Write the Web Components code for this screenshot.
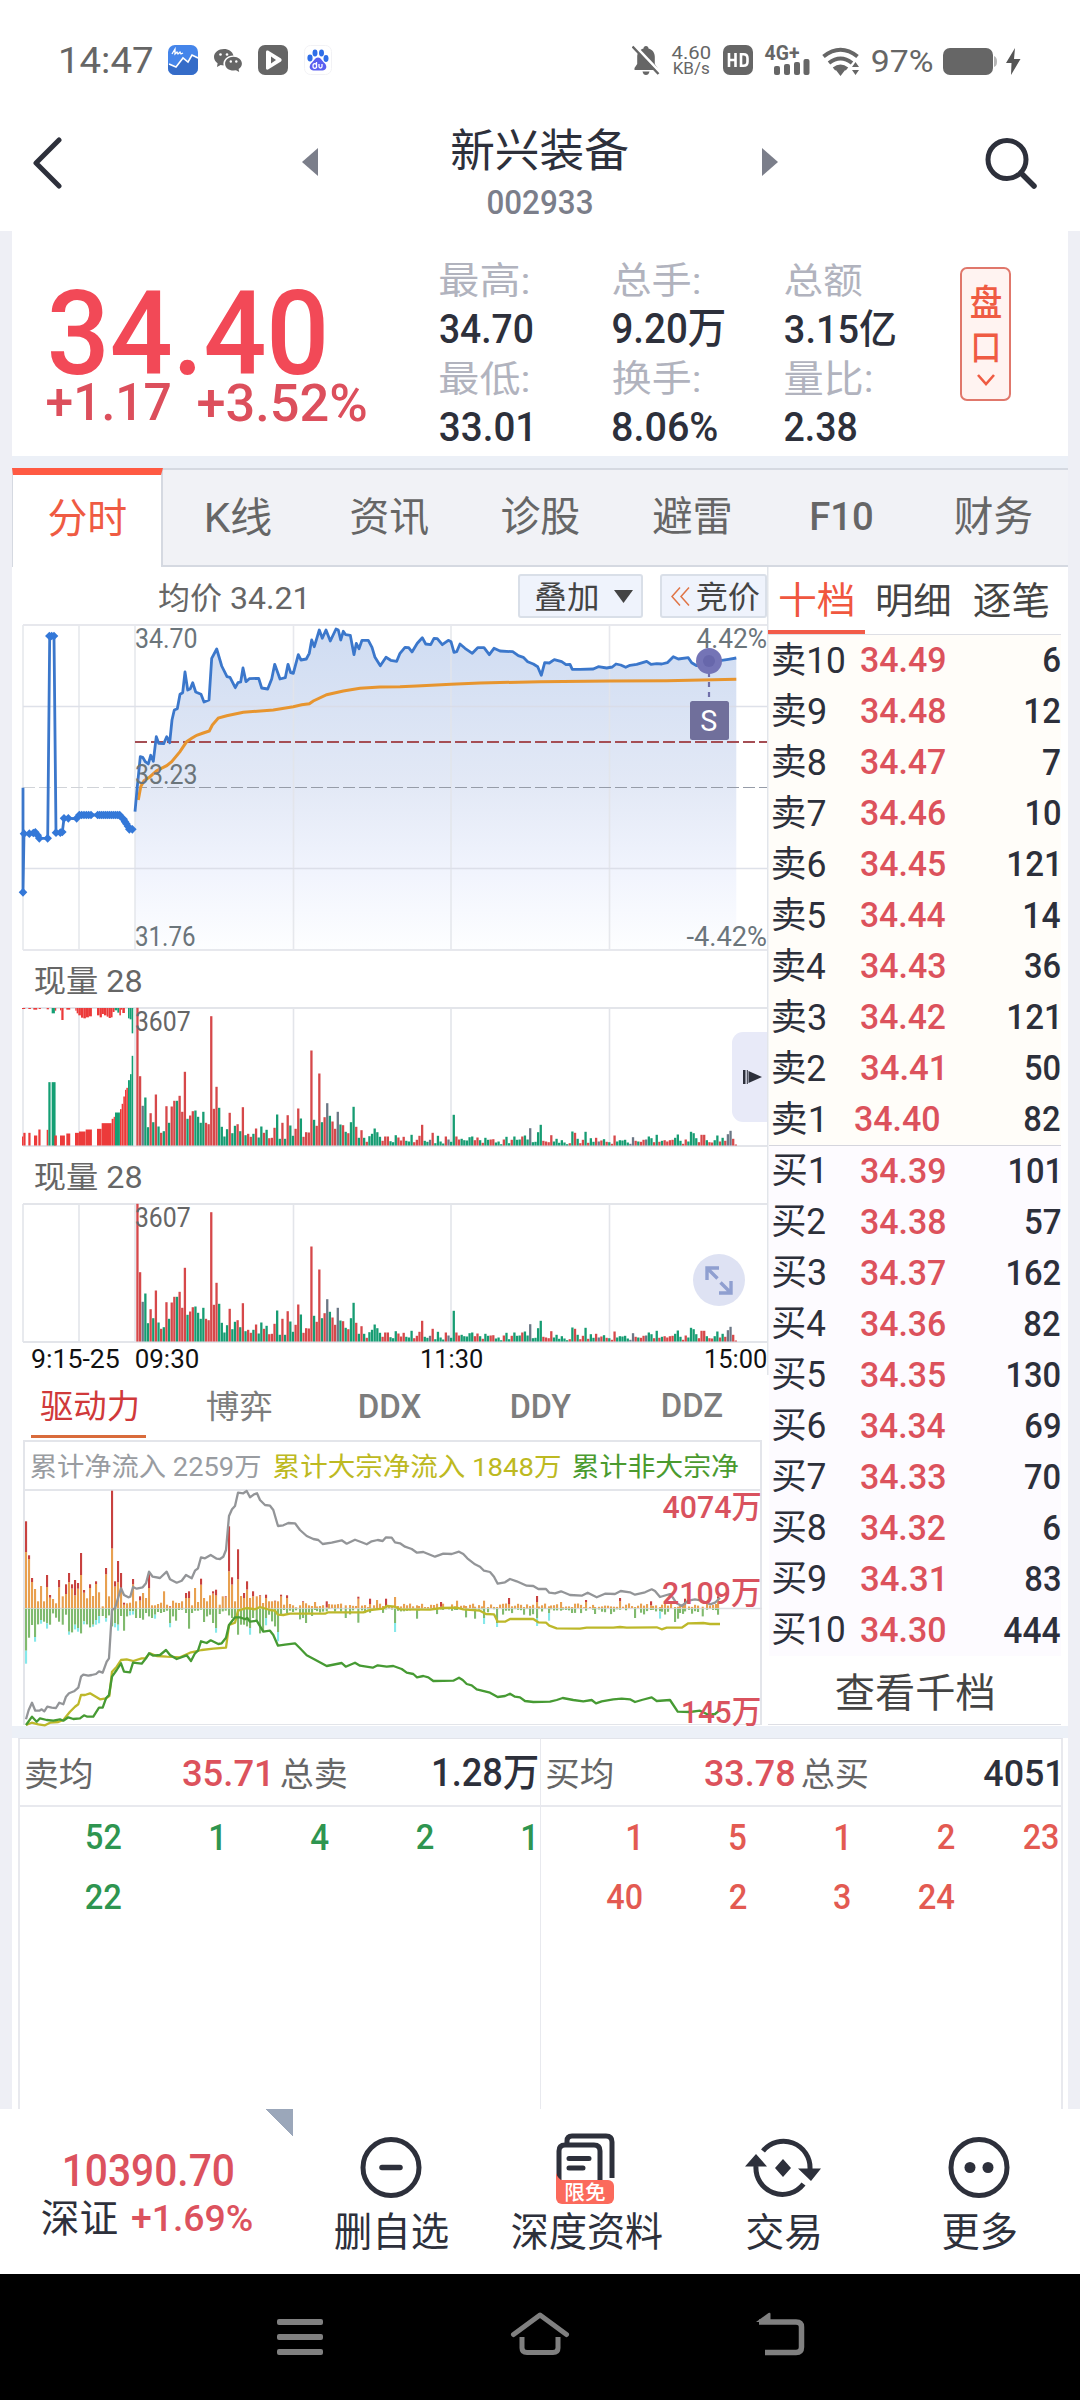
<!DOCTYPE html>
<html lang="zh-CN">
<head>
<meta charset="utf-8">
<title>新兴装备 002933</title>
<style>
html,body{margin:0;padding:0;background:#fff}
body{width:1080px;font-family:Roboto,"Noto Sans CJK SC",sans-serif;color:#2d303b}
.body{display:flex;flex-direction:column;width:1080px;height:1878px;box-sizing:border-box;padding:0 12px;background:#eeeff5}
.split{display:flex;height:1159px;background:#fff}
</style>
</head>
<body>
<status-bar></status-bar>
<title-bar name="新兴装备" code="002933"></title-bar>
<div class="body">
  <quote-head></quote-head>
  <main-tabs></main-tabs>
  <div class="split"><time-charts></time-charts><order-book></order-book></div>
  <queue-panel></queue-panel>
</div>
<bottom-bar></bottom-bar>
<system-nav></system-nav>
<script>
const FAMILY='Roboto,"Noto Sans CJK SC",sans-serif';
const ctx=document.createElement('canvas').getContext('2d');

/* A line of text whose box is its ink: w and h are the ink's size in pixels, k a width factor when w is not given. */
class InkText extends HTMLElement{
  connectedCallback(){
    if(this.shadowRoot)return;
    const root=this.attachShadow({mode:'open'});
    const text=this.textContent,weight=getComputedStyle(this).fontWeight;
    ctx.font=`${weight} 100px ${FAMILY}`;
    let m=ctx.measureText(text);
    const h=+this.getAttribute('h');
    const size=h*100/(m.actualBoundingBoxAscent+m.actualBoundingBoxDescent);
    const q=size/100,left=-m.actualBoundingBoxLeft*q,ink=(m.actualBoundingBoxRight+m.actualBoundingBoxLeft)*q;
    const w=+this.getAttribute('w')||ink*(+this.getAttribute('k')||1);
    const line=size*1.2,base=(line-(m.fontBoundingBoxAscent+m.fontBoundingBoxDescent)*q)/2+m.fontBoundingBoxAscent*q;
    const sx=w/ink;
    root.innerHTML=`<style>:host{display:block;flex:none;width:${w}px;height:${h}px}
      span{display:block;width:max-content;white-space:pre;font-family:${FAMILY};font-size:${size}px;line-height:${line}px;transform-origin:0 0;
      transform:translate(${-left*sx}px,${m.actualBoundingBoxAscent*q-base}px) scaleX(${sx})}</style><span><slot></slot></span>`;
  }
}
customElements.define('ink-text',InkText);

const t=(s,w,h,style='')=>`<ink-text ${w?`w="${w}"`:''} h="${h}" style="${style}">${s}</ink-text>`;
const part=(name,build)=>customElements.define(name,class extends HTMLElement{
  connectedCallback(){if(!this.shadowRoot)this.attachShadow({mode:'open'}).innerHTML=build(this)}
});
const ic=(w,h,vb,body,style='')=>`<svg width="${w}" height="${h}" viewBox="${vb}" style="flex:none;display:block;${style}">${body}</svg>`;

part('status-bar',()=>`<style>
:host{display:flex;height:75px;padding:45px 60px 0 61px;box-sizing:border-box;width:1080px;height:120px;align-items:flex-start;color:#666}
.net{margin-left:12px;display:flex;flex-direction:column;gap:3px;align-items:center;margin-top:1px}
</style>
${t('14:47',91,27,'margin-top:2px')}
${ic(30,30,'0 0 30 30','<rect width="30" height="30" rx="7" fill="#4585ea"/><path d="M0 19l8 2 6-8 5 3 5-6 6 4v9a7 7 0 0 1-7 7H7a7 7 0 0 1-7-7z" fill="#356cc8"/><path d="M1 19l7 3 7-9 5 4 4-7 6 3" fill="none" stroke="#fff" stroke-width="1.6"/><path d="M4 9l3-5 0 5 2-2 1 2 2-2 1 2 2-1" fill="none" stroke="#fff" stroke-width="1.3"/>','margin-left:16px')}
${ic(28,24,'0 0 28 24','<path d="M10 1C4.500 1 0 4.500 0 9c0 2.600 1.400 4.800 3.600 6.200L3 19l3.600-2 3 .5C8.500 12 13 7.500 19.500 7.600 18.500 3.500 14.500 1 10 1z" fill="#666"/><path d="M19.500 8.800c-4.700 0-8.400 3-8.400 6.900s3.700 6.900 8.400 6.900l2.500-.3 3.200 1.700-.6-2.900c1.900-1.300 3.300-3.200 3.300-5.400 0-3.900-3.700-6.900-8.400-6.900z" fill="#666"/><g fill="#fff"><circle cx="6.500" cy="6.500" r="1.300"/><circle cx="13" cy="6.500" r="1.300"/><circle cx="16.800" cy="13.500" r="1.200"/><circle cx="22.300" cy="13.500" r="1.200"/></g>','margin:3px 0 0 16px')}
${ic(30,30,'0 0 30 30','<rect width="30" height="30" rx="7" fill="#666"/><path d="M8 6.500q0-1.500 2-1l13 8q1.500 1.500 0 3l-13 8q-2 .5-2-1z" fill="#fff"/><path d="M13 11.500v7l5-3.500z" fill="#666"/>','margin-left:16px')}
${ic(28,30,'0 0 28 30','<rect x=".5" y=".5" width="27" height="29" rx="6" fill="#fff" stroke="#f2f2f5"/><g fill="#2e6ee8"><ellipse cx="6" cy="13" rx="2.600" ry="3.400"/><ellipse cx="11" cy="8" rx="2.500" ry="3.400"/><ellipse cx="17.500" cy="8" rx="2.500" ry="3.400"/><ellipse cx="22" cy="13.500" rx="2.500" ry="3.400"/></g><path d="M14 12.500c3 0 4 3.500 6.500 5.500 3.500 3.500 1.500 7.500-2 7.500h-9c-3.500 0-5.500-4-2-7.500C10 16 11 12.500 14 12.500z" fill="#5a5ff0"/><path d="M12.500 17v6M12.500 21a1.800 1.800 0 1 1-3.400 0 1.800 1.800 0 1 1 3.400 0M15 19v2.500q0 1.500 1.500 1.500T18 21.500V19" stroke="#fff" stroke-width="1.300" fill="none"/>','margin-left:16px')}
${ic(28,30,'0 0 28 30','<path d="M14 1c1.500 0 2.500 1 2.500 2.400 4 1 6.300 4.300 6.300 8.400V19l2.700 4v2H2.500v-2l2.700-4v-7.200c0-4 2.300-7.400 6.300-8.400C11.500 2 12.500 1 14 1zM10.500 26.500h7q-.8 3.500-3.500 3.500t-3.500-3.500z" fill="#666"/><path d="M2.500 .5L28 27.500" stroke="#fff" stroke-width="3"/><path d="M.5 1.500L26.500 29" stroke="#666" stroke-width="2.400"/>','margin-left:300px')}
<div class="net">${t('4.60',38,13.5)}${t('KB/s',35,13)}</div>
${ic(30,30,'0 0 30 30','<rect width="30" height="30" rx="7" fill="#666"/><path d="M6 8v14M12.500 8v14M6 15h6.500M18 9.200v11.600h2.500q4 0 4-4v-3.600q0-4-4-4z" stroke="#fff" stroke-width="2.600" fill="none"/>','margin-left:13px')}
<div style="margin-left:12px;display:flex;flex-direction:column;width:45px;height:30px">${t('4G+',34,15,'font-weight:700')}${ic(36,16,'0 0 36 16','<g fill="#666"><rect y="7" width="6" height="9" rx="2"/><rect x="10" y="5" width="6" height="11" rx="2"/><rect x="20" y="3" width="6" height="13" rx="2"/><rect x="29.500" width="6" height="16" rx="2"/></g>','margin:-1px 0 0 9px')}</div>
${ic(38,29,'0 0 38 29','<g fill="none" stroke="#666" stroke-width="4"><path d="M1.500 9.500Q18.500-4 35.500 9.500"/><path d="M7 16Q18.500 7 30 16"/><path d="M12 22Q18.500 17 25 22"/></g><path d="M13.500 22.500q5-3.500 10 0L18.500 29zM30 20l3.500-5 3.500 5zM30 23h7l-3.500 5z" fill="#666"/>','margin:2px 0 0 12px')}
${t('97%',60,23,'margin:5px 0 0 12px')}
${ic(54,27,'0 0 54 27','<rect width="50" height="27" rx="7" fill="#666"/><path d="M51 8q3 1 3 5.500T51 19z" fill="#b5b5b5"/>','margin:3px 0 0 11px')}
${ic(16,27,'0 0 16 27','<path d="M10 0L1 15h5.500L6 27l9.500-16H9z" fill="#555"/>','margin:3px 0 0 8px')}
`);

part('title-bar',e=>`<style>:host{display:flex;width:1080px;height:111px}
.mid{display:flex;flex-direction:column;align-items:center;width:176px;margin-left:134px;padding-top:9px;gap:19px}</style>
${ic(30,52,'0 0 30 52','<path d="M27 3L4 26l23 23" fill="none" stroke="#2d303b" stroke-width="5" stroke-linecap="round" stroke-linejoin="round"/>','margin:17px 0 0 32px')}
${ic(16,28,'0 0 16 28','<path d="M16 0v28L0 14z" fill="#7b7e8a"/>','margin:28px 0 0 240px')}
<div class="mid">${t(e.getAttribute('name'),176,43)}${t(e.getAttribute('code'),104,24,'color:#7b7e8a;font-weight:500')}</div>
${ic(16,28,'0 0 16 28','<path d="M0 0v28l16-14z" fill="#7b7e8a"/>','margin:28px 0 0 134px')}
${ic(54,54,'0 0 54 54','<circle cx="22" cy="22.500" r="19" fill="none" stroke="#2d303b" stroke-width="5"/><path d="M36 36l13 13" stroke="#2d303b" stroke-width="5.500" stroke-linecap="round"/>','margin:17px 0 0 207px')}
`);

part('quote-head',()=>{
 const col=(a,aw,b,bw,bh,c,cw,d,dw)=>`<div class="col">${t(a,aw,35,'color:#b1b3be;margin-top:32px')}<div class="v">${t(b,bw,bh)}</div>${t(c,cw,35,'color:#b1b3be')}<div class="v">${t(d,dw,30)}</div></div>`;
 return `<style>:host{display:flex;height:225px;background:#fff}
.price{width:428px;color:#f24957}.price ink-text{font-weight:500}
.chg{display:flex;gap:28px;margin:8px 0 0 35px;color:#dc4f5c}
.col{width:172.500px}.v{height:63px;display:flex;align-items:center;font-weight:500;box-sizing:border-box;padding-bottom:2px}
.pan{width:47px;height:130px;border:2px solid #e0776b;border-radius:7px;background:#fff3f1;margin:36px 0 0 2.500px;color:#ef5b43;display:flex;flex-direction:column;align-items:center;font-weight:500}
</style><div class="price">${t('34.40',274,86,'margin:59px 0 0 38px')}<div class="chg">${t('+1.17',123,38)}${t('+3.52%',168,38)}</div></div>
${col('最高:',88,'34.70',92,30,'最低:',88,'33.01',90)}${col('总手:',86,'9.20万',111,37,'换手:',86,'8.06%',104)}${col('总额',77,'3.15亿',110,37,'量比:',86,'2.38',71)}
<div class="pan">${t('盘',30,33,'margin-top:17px')}${t('口',24,29,'margin-top:15px')}${ic(20,14,'0 0 20 14','<path d="M2 2l8 9 8-9" fill="none" stroke="#ef5b43" stroke-width="2.600"/>','margin-top:10px')}</div>`});

part('main-tabs',()=>{
 const a=[['分时',77],['K线',64],['资讯',77],['诊股',77],['避雷',77],['F10',60,29],['财务',77]];
 return `<style>:host{display:flex;height:111px;padding-top:12px;background:#ecf0f7;box-sizing:border-box}
div{flex:1;background:#f1f2f6;border-top:2px solid #d5d9e1;border-bottom:2px solid #d5d9e1;display:flex;align-items:center;justify-content:center;color:#666;box-sizing:border-box;padding-bottom:2px;padding-left:1px}
div.on{background:#fff;border:0 solid #d5d9e1;border-width:0 2px 0 1px;border-top:7px solid #ff5a43;color:#ef5b43;flex:none;width:151px;padding:0 0 7px}</style>`+
 a.map((x,i)=>`<div class="${i?'':'on'}">${t(x[0],x[1],x[2]||38,x[2]?'font-weight:500':'')}</div>`).join('')});

/* label inside a chart: x is the ink's left edge, y the baseline */
const lab=(s,x,y,w,h,c,wt=400)=>{const f=h/.73;return `<text x="${x-f*.06}" y="${y}" font-size="${f}" font-weight="${wt}" fill="${c}" textLength="${w+f*.1}" lengthAdjust="spacingAndGlyphs">${s}</text>`};
/* points are noted in thirds of a pixel from the chart's own origin */
const pts=(s,ox,oy)=>s.trim().split(/\s+/).map(p=>{const[a,b]=p.split(',');return (ox+a/3).toFixed(1)+','+(oy+b/3).toFixed(1)}).join(' ');
const grid=(y0,y1)=>`<g stroke="#e3e5ea" stroke-width="2" fill="none"><path d="M23 ${y0}H767M23 ${y1}H767"/><path stroke-width="1.600" d="M23 ${y0}V${y1}M79 ${y0}V${y1}M135 ${y0}V${y1}M293.500 ${y0}V${y1}M451 ${y0}V${y1}M609.500 ${y0}V${y1}"/></g>`;

part('price-chart',()=>{
 const p1='405,755 412,680 421,590 428,592 436,605 445,612 452,586 460,604 469,530 476,550 491,551 500,530 509,548 516,480 523,450 532,446 540,403 548,398 555,336 563,390 571,386 578,368 587,396 603,403 612,426 627,420 635,295 650,267 665,318 681,350 690,352 706,383 714,368 722,366 729,324 738,365 748,356 776,355 785,384 803,387 815,357 824,313 840,357 856,353 864,313 872,338 880,340 895,284 903,300 919,297 928,280 935,240 943,260 958,210 967,235 978,210 991,243 1008,207 1015,210 1022,240 1030,214 1037,224 1051,226 1062,284 1069,250 1077,266 1086,241 1105,241 1116,262 1125,292 1141,317';
 const p2='18,292 32,301 50,304 60,280 75,262 86,263 96,276 112,250 127,233 137,252 152,254 162,235 172,236 187,254 205,241 213,245 222,277 230,275 240,252 255,265 277,280 293,263 312,263 328,284 342,265 360,273 398,275 415,287 430,292 443,305 460,312 473,320 484,346 494,308 508,309 523,299 545,305 558,314 570,313 577,328 600,328 640,327 655,320 680,324 697,321 708,312 722,315 737,322 750,316 770,313 800,304 813,313 830,311 845,312 862,308 880,290 895,297 925,293 935,308 950,317 965,310 985,302 1000,300 1020,302 1045,298 1069,294';
 const line=pts(p1,0,560)+' '+pts(p2,380,560);
 const avg=pts('415,720 422,680 432,662 450,650 470,632 500,617 515,605 540,575 550,560 560,545 575,535 590,526 610,519 628,513 637,495 655,474 680,467 730,457 820,450 880,440 905,434 928,431 940,423 980,404 1030,393 1080,385 1140,381 1200,380',0,560)+' '+pts('110,378 213,373 300,369 480,365 690,363 860,362 1069,358',380,560);
 const pre='69,683 69,997 72,821 88,821 106,818 120,835 143,835 149,229 162,229 168,818 187,817 192,775 205,775 230,776 238,765 357,765 375,780 390,808 400,808';
 let d='';const dia=(x,y)=>{x/=3;y=560+y/3;d+=`M${x-4.300} ${y}L${x} ${y-4.300}L${x+4.300} ${y}L${x} ${y+4.300}z`};
 [[69,997],[72,821],[88,821],[100,819],[106,817],[113,826],[118,835],[143,835],[148,228],[155,228],[162,228],[168,818],[181,818],[187,816],[192,775],[205,775],[230,775],[360,768],[366,773],[371,778],[375,785],[379,791],[384,799],[388,808],[397,808]].forEach(a=>dia(...a));
 for(let x=238;x<276;x+=7)dia(x,765);for(let x=293;x<360;x+=6)dia(x,765);
 const c='#6b757b';
 return `<style>:host{display:block;height:327px}svg{display:block;overflow:visible}text{font-family:${FAMILY}}</style>
<svg width="755" height="327" viewBox="12 624 755 327"><defs><linearGradient id="g" gradientUnits="userSpaceOnUse" x1="0" y1="625" x2="0" y2="950"><stop offset="0" stop-color="#cfdcf2"/><stop offset=".5" stop-color="#e3e9f6"/><stop offset=".76" stop-color="#f1f4fd"/><stop offset="1" stop-color="#fdfeff"/></linearGradient></defs>
<polygon points="${line} 736.300,950 135,950" fill="url(#g)"/>
<g opacity=".85">${grid(625,950)}<path d="M23 706.500H767M23 868.500H767" stroke="#d9dce6" stroke-width="1.300"/></g>
<path d="M23 787.500H135" stroke="#d0d3d8" stroke-width="1.200" stroke-dasharray="12 4"/><path d="M135 787.500H767" stroke="#969ca8" stroke-width="1.200" stroke-dasharray="12 4"/>
<path d="M135 742H767" stroke="#a54e54" stroke-width="2" stroke-dasharray="12 4"/>
<polyline points="${avg}" fill="none" stroke="#e7952f" stroke-width="3"/>
<polyline points="${line}" fill="none" stroke="#3b77cb" stroke-width="2.800" stroke-linejoin="round"/>
<polyline points="${pts(pre,0,560)}" fill="none" stroke="#3b77cb" stroke-width="2.800"/><path d="${d}" fill="#3478d8"/>
${lab('34.70',136.500,648,60,19.500,c)}${lab('33.23',136.500,784,60,19.500,c)}${lab('31.76',136.500,946,58,19.500,c)}${lab('4.42%',698,648,68,19.500,c)}${lab('-4.42%',688,946,78,19.500,c)}
<path d="M709 672V702" stroke="#706faa" stroke-width="2.200" stroke-dasharray="5 5"/><circle cx="709" cy="661" r="13" fill="#7474b6"/><circle cx="709" cy="661" r="6" fill="#6767ab"/>
<rect x="690" y="701" width="39" height="39" rx="2.500" fill="#706f9b"/>${lab('S',702,731,14,22,'#fff')}</svg>`});

const VOL='r413 r208 k119 g144 g55 r97 g70 r153 g57 r38 g43 r118 g68 r117 r134 g134 r149 r101 r221 g80 r90 r103 g105 g86 g68 g101 r68 r64 r388 r110 r176 g113 g56 g27 g49 r98 g37 g59 r64 g43 r115 g31 r35 r26 g35 r51 g24 g57 r38 g47 r22 r23 r53 g93 g20 r68 g20 r91 g60 g29 r50 r111 g81 r26 r40 r39 r285 g77 r59 r216 g70 r85 k127 g89 r72 r50 k101 g63 r61 g41 r37 g70 g116 r56 g23 r46 g23 r11 g28 g35 g51 g40 g26 r14 r27 r27 g13 g10 g31 r24 r15 r26 g14 g12 g32 r10 r17 r29 r62 g14 g11 k17 r38 g7 g29 g12 g6 r27 k18 g11 g92 r27 r18 g20 g16 g15 g25 g27 r16 r24 g16 r8 g23 g17 r18 r19 g9 g12 g4 r18 g26 g7 r17 g27 g17 g18 r27 g30 g18 k52 g10 g11 g40 g62 r14 r12 r10 r31 g12 g20 g8 g16 g9 g4 r7 g42 r38 g20 r7 r17 g41 r8 g22 g11 r23 k12 r15 g19 r11 g10 r5 r30 g12 g16 g15 g17 g9 k5 k25 r14 g12 r11 r17 k18 g27 g22 r10 g32 r11 g14 r16 r12 r16 r17 g23 g33 g14 r5 r18 g12 g41 g37 g22 r10 r32 r32 g16 r10 r9 g16 g30 r12 g23 r14 k34 k44 r20 r3'.split(' ');
const PRE='r66-70:27 r70-77:38 r85-92:38 r102-112:30 r115-122:48 r140-145:47 g145-152:190 g155-167:190 r163-171:30 r180-195:30 r199-211:36 r225-237:38 r237-257:42 r257-276:48 r291-305:50 r305-335:67 r335-341:80 r341-345:86 g345-360:99 r360-365:109 r365-370:125 r370-375:147 r375-379:167 r379-384:173 g384-390:196 g390-395:214 g395-400:269';
const TOP='r66-76:3 r85-93:3 r100-112:5 r116-123:3 r140-147:4 g155-165:16 r165-169:8 r180-184:7 r184-191:36 r199-211:5 r226-230:8 r230-235:16 r235-243:22 r243-250:29 r250-258:31 r258-267:28 r267-276:25 r291-299:22 r299-306:28 r306-312:18 r312-320:22 r320-326:26 r326-333:30 r333-338:28 r338-344:12 g344-352:7 g352-358:14 r358-363:22 r363-367:5 r367-375:15 g384-389:31 g389-395:34 g395-400:76';
part('volume-chart',e=>{
 const C={r:'#d6484a',g:'#169c72',k:'#6b7785'};
 let s='';const full=e.hasAttribute('auction'),base=1145.500;
 if(full){const m={r:'#ec3a3a',g:'#149f74'};const dr=(str,up)=>str.split(' ').forEach(q=>{const[,c,a,b,h]=/(.)(\d+)-(\d+):(\d+)/.exec(q);s+=`<rect x="${a/3}" y="${up?base-h/3:1008}" width="${(b-a)/3-.1}" height="${h/3}" fill="${m[c]}"/>`});dr(PRE,1);dr(TOP,0)}
 VOL.forEach((v,i)=>{const h=v.slice(1)/3;s+=`<rect x="${(136.300+i*2.636).toFixed(2)}" y="${(base-h).toFixed(1)}" width="2.300" height="${h.toFixed(1)}" fill="${C[v[0]]}"/>`});
 return `<style>:host{display:block;height:140px}svg{display:block;overflow:visible}text{font-family:${FAMILY}}</style><svg width="755" height="140" viewBox="12 1007 755 140">${grid(1008,1146)}${s}${lab('3607',136.500,1031,53,19.500,'#666')}</svg>`});

const FLOW='78:168,260,128,167 87:147,158,89 96:78,90,51 105:57,0,87,101 114:20,0,49 123:66,0,36,47 132:20,0,41 141:63,99,46,62 150:31,39,50 159:27,0,16 168:14,0,29 177:62,84,41 188:35,0,50 198:42,71,20 207:77,105,71,80 216:58,71,73 225:38,84,50,64 234:58,75,60,71 243:99,165,76 252:46,54,40,49 261:29,0,49 270:60,71,58 279:36,0,50,56 288:72,80,36,50 297:47,0,24,46 308:5,0,24 318:101,120,30,41 327:35,0,22 336:179,352,55 345:64,80,46,58 354:77,141,50,68 363:57,105,24 372:10,16,68 381:14,0,25 390:16,0,10,22 399:71,87,10,20 408:20,0,30 420:22,35,30 429:45,0,35 438:30,0,15 447:60,105,25 456:8,0,30 465:8,0,20,32 474:12,0,12 483:16,0,15 492:50,0,12 501:10,0,8 510:3,5,45,58 519:22,0,25 528:16,0,38 537:15,0,6 546:20,0,5 558:30,45,15 567:30,50,62 576:8,0,15 585:60,0,8 594:18,0,8 603:70,88,5 612:30,0,42 621:20,0,25 630:38,0,20 639:43,50,45 648:38,55,60,74 659:10,0,18 668:35,0,10 677:32,35,8 687:110,245,22 696:70,92,30 705:20,0,30 714:86,176,80 723:36,0,50 732:30,45,50 741:55,80,55 750:30,0,60,80 759:35,50,30 770:35,0,40 780:35,38,76 789:15,0,70 798:30,40,30,52 807:20,0,20 816:20,0,40 825:20,22,55 834:20,0,72,100 843:35,40,20 852:10,0,6 861:30,38,15 870:12,0,8 879:8,0,12 900:8,0,34 909:18,20,30 918:14,0,45 927:8,0,14 936:6,0,24 945:18,0,6 980:2,20,10 1037:8,0,30 1075:28,34,44 1110:12,28,14 1131:24,0,4 1158:6,28,4 1185:33,0,45,72 1251:8,0,32 1323:4,18,4 1371:22,0,6 1398:6,0,28 1425:4,0,32 1452:22,0,30,48 1491:3,0,45,57 1527:12,30,8 1572:3,0,20 1611:18,36,30,54 1647:5,0,15,38 1683:18,0,8 1758:18,24,8 1785:3,0,18 1860:20,30,5 1905:3,0,30 1953:8,20,6 1980:3,0,10,32 2025:3,0,42 2034:4,0,32 2055:10,28,10 2108:4,0,25 2154:28,35,20';
part('flow-chart',()=>{
 const have=FLOW.split(' ').map(q=>{const[x,v]=q.split(':');return[+x,...v.split(',').map(Number)]});
 let seed=7;const rnd=()=>(seed=(seed*16807)%2147483647)/2147483647;
 for(let x=888;x<2150;x+=9)if(!have.some(h=>Math.abs(h[0]-x)<6))have.push([x,2+rnd()*12,0,1+rnd()*rnd()*22]);
 const z=714;let s='';const bar=(x,a,b,c)=>{s+=`<rect x="${(x/3-1).toFixed(1)}" y="${(1370+a/3).toFixed(1)}" width="2.100" height="${((b-a)/3).toFixed(1)}" fill="${c}"/>`};
 have.forEach(([x,o,r=0,g=0,c=0])=>{if(o)bar(x,z-o,z,'#e8a050');if(r>o)bar(x,z-r,z-o,'#c8413f');if(g)bar(x,z+2,z+g,'#80ba6e');if(c>g)bar(x,z+g,z+c,'#86e8ea')});
 const gy=pts('78,1048 86,1020 96,998 106,1022 118,1022 125,1018 133,1024 142,1010 155,1013 168,1014 178,998 190,1003 198,980 207,970 222,964 235,953 243,920 250,914 265,917 275,915 288,912 297,904 308,908 320,875 327,865 336,720 345,715 354,685 363,655 372,675 385,682 391,680 399,651 410,656 428,652 438,640 447,605 458,620 480,624 500,605 510,628 530,638 545,632 558,615 575,625 585,602 594,595 603,562 615,565 632,555 650,566 660,567 670,560 678,540 687,438 696,418 705,408 714,368 730,370 740,363 750,382 762,373 771,370 780,390 795,405 810,407 820,420 834,468 850,466 865,459 885,460 900,480 920,498 940,507 955,510 968,522 995,518 1025,511 1040,521 1065,509 1085,517 1100,523 1115,514 1133,510',0,1370)+' '+pts('8,513 18,502 35,503 45,517 60,520 75,530 95,537 111,548 130,546 165,560 190,551 215,552 237,545 250,552 262,565 285,583 300,590 312,602 330,606 342,620 353,641 375,637 390,627 410,634 440,647 460,648 475,657 498,657 508,668 525,670 543,664 570,675 605,677 623,668 650,682 675,671 705,672 722,663 750,667 765,674 795,667 815,658 825,663 840,681 870,672 880,685 890,700 905,708 925,692 945,688 965,692 990,703 1005,698 1020,683',380,1370);
 const ye=pts('78,1065 95,1058 115,1063 135,1066 150,1058 175,1056 190,1050 210,1025 225,1010 235,1003 243,975 255,975 270,970 290,982 300,988 318,985 328,978 336,905 350,890 363,870 380,868 400,873 425,865 436,865 450,850 470,858 500,860 540,862 570,848 605,840 640,836 678,833 687,765 705,758 714,722 740,714 765,718 780,711 810,720 825,722 834,734 850,735 870,731 975,731 985,727 1090,727 1110,720',0,1370)+' '+pts('10,716 20,708 45,710 60,718 150,719 185,714 230,713 250,718 300,722 318,732 342,733 353,755 375,755 390,747 460,747 475,757 498,758 508,767 530,775 600,776 620,773 700,773 720,771 740,773 830,772 845,778 860,773 905,773 925,760 970,759 990,762 1020,762',380,1370);
 const gr=pts('78,1065 96,1040 110,1055 120,1045 140,1050 160,1052 180,1048 190,1052 205,1042 220,1047 240,1045 252,1036 262,1040 280,1040 297,1013 308,1013 318,985 327,975 336,920 350,900 363,880 372,905 390,907 399,878 425,881 438,865 447,850 460,857 480,855 498,840 510,855 530,867 560,856 573,873 585,850 594,842 603,814 620,819 632,811 655,822 665,820 678,803 687,765 705,742 720,742 735,748 742,744 750,755 770,752 790,785 810,782 820,795 834,827 855,824 885,820 900,835 920,856 940,866 980,888 1025,879 1037,890 1065,878 1080,887 1118,893 1133,886',0,1370)+' '+pts('20,890 40,888 65,897 80,908 100,912 111,922 130,918 145,922 160,933 220,932 237,923 248,930 260,942 275,946 290,958 330,968 353,981 375,978 390,971 405,980 420,982 435,993 460,996 510,995 530,990 548,984 580,990 610,994 635,990 648,1000 665,994 700,988 725,986 750,988 765,996 785,990 815,982 830,993 870,990 880,1005 893,1025 930,1026 960,1022 985,1034 1005,1032 1020,1020',380,1370);
 const c='#d9525e';
 return `<style>:host{display:block;height:235px;margin-left:-2px}svg{display:block;overflow:visible}text{font-family:${FAMILY}}</style><svg width="739" height="235" viewBox="23 1491 739 235">
<path d="M23 1608.500H762" stroke="#dcdee2" stroke-width="1.600"/>${s}
<g fill="none" stroke-width="2.300" stroke-linejoin="round"><polyline points="${gy}" stroke="#939598"/><polyline points="${ye}" stroke="#bdb82a"/><polyline points="${gr}" stroke="#469a33"/></g>
${lab('4074万',664.500,1518,96,23,c,500)}${lab('2109万',664,1604,96,23,c,500)}${lab('145万',683,1722.500,77,23,c,500)}</svg>`});

part('time-charts',()=>`<style>
:host{display:block;width:755px;position:relative;flex:none}
.bar{display:flex;height:57px;box-sizing:border-box;padding-top:7px;color:#444}
.btn{display:flex;align-items:center;height:44px;box-sizing:border-box;border:2px solid #d9dfe8;border-radius:3px;background:#eff3fc}
.cap{display:flex;height:56px;box-sizing:border-box;padding:17px 0 0 23px;color:#666}
.axis{display:flex;height:32px;box-sizing:border-box;padding:7px 0 0 20px;color:#111}
.tabs{display:flex;height:65px;color:#7d7d7d;padding-left:4px}
.tabs div{flex:none;width:151px;display:flex;justify-content:center;align-items:center;box-sizing:border-box;padding-bottom:3px;font-weight:500}
.tabs .on,.tabs .cn{font-weight:400}
.tabs .on{width:115px;margin:0 17.500px 0 15px;border-bottom:3px solid #d96b3b;height:63px;color:#d0393a;padding:0}
.box{margin-left:11px;width:739px;border:2px solid #e3e5ea;border-bottom:1px solid #e3e5ea;box-sizing:border-box;height:285px}
.leg{display:flex;border-bottom:2px solid #e3e5ea;padding:12px 0 0 6px;box-sizing:border-box;height:49px}
.side{position:absolute;left:720px;top:465px;width:35px;height:90px;background:#e8eaf8;border-radius:11px 0 0 11px;display:flex;align-items:center;justify-content:center}
.zoom{position:absolute;left:681px;top:687px;width:52px;height:52px;border-radius:50%;background:#dee2f3;display:flex;align-items:center;justify-content:center}
</style>
<div class="bar">${t('均价 34.21',145,29,'color:#666;margin:9px 0 0 147px')}
<div class="btn" style="width:125px;margin-left:214px">${t('叠加',61,29,'margin-left:16px')}${ic(19,13,'0 0 19 13','<path d="M0 0h19l-9.500 13z" fill="#444"/>','margin:0 0 0 17px')}</div>
<div class="btn" style="width:107px;margin-left:17px">${ic(19,19,'0 0 19 19','<path d="M9 .5L1 9.500l8 9M18 .5l-8 9 8 9" fill="none" stroke="#e07546" stroke-width="1.500"/>','margin-left:9px')}${t('竞价',62,29,'margin-left:7px')}</div></div>
<price-chart></price-chart>
<div class="cap">${t('现量 28',106,27.500)}</div><volume-chart auction></volume-chart>
<div class="cap">${t('现量 28',106,27.500)}</div><volume-chart></volume-chart>
<div class="axis">${t('9:15-25',87,19.500)}${t('09:30',62,19.500,'margin-left:17px')}${t('11:30',60,19.500,'margin-left:224px')}${t('15:00',60,19.500,'margin-left:224px')}</div>
<div class="tabs"><div class="on">${t('驱动力',96,31)}</div><div class="cn">${t('博弈',64,31)}</div><div>${t('DDX',61,24)}</div><div>${t('DDY',59,24)}</div><div>${t('DDZ',59,24)}</div></div>
<div class="box"><div class="leg">${t('累计净流入 2259万',229,25,'color:#999ca1')}${t('累计大宗净流入 1848万',286,25,'color:#bdb921;margin-left:14px')}${t('累计非大宗净',165,25,'color:#4a9a2f;margin-left:13px')}</div><flow-chart></flow-chart></div>
<div class="side">${ic(20,14,'0 0 20 14','<path d="M0 0h2.500v14H0zM3.800 0h1v14h-1zM5.500 1v12L19 7z" fill="#2d303b"/>','margin-left:7px')}</div>
<div class="zoom">${ic(28,29,'0 0 28 29','<path d="M2 14V2h12M3 3l9.500 9.500M26 15v12H14M25 26l-9.500-9.500" fill="none" stroke="#8f9fd0" stroke-width="3.400"/>')}</div>`);

part('order-book',()=>{
 const S=[6,12,7,10,121,14,36,121,50,82],B=[101,57,162,82,130,69,70,6,83,444];
 const row=(l,n,p,q,h)=>`<div class="row"><div class="l">${t(l+n,n==10?71:n==1?48:52,h)}</div>${t(p,p.endsWith('1')?81:84,26,'color:#dc525c;font-weight:500;'+(n==1&&l=='卖'?'margin-left:-6px':''))}<ink-text h="26" k=".93" class="q" style="${String(q).endsWith('1')?'margin-right:4px':''}">${q}</ink-text></div>`;
 return `<style>:host{display:block;flex:none;width:301px;background:linear-gradient(#e2e5ea,#e2e5ea) 0 0/1.500px 808px no-repeat}
.tabs{display:flex;height:67px;margin:0 7px 0 1px;border-bottom:1px solid #dedfe5;color:#444;box-sizing:content-box}
.tabs div{display:flex;align-items:center;justify-content:center;width:97px}
.tabs .on{color:#f0573f;box-shadow:inset 0 -4px #f25b48}
.s,.b{display:flex;flex-direction:column;height:511px;margin:0 7px 0 1.500px;box-sizing:border-box}
.s{background:#fffdf9;height:510px}.b{background:#fdfbff;border-top:1px solid #d5d5dd}
.row{flex:1;display:flex;align-items:center;padding:0 0 2px 4.500px}.l{width:88px;font-weight:400}.q{margin-left:auto;margin-right:1px;font-weight:500}
.more{display:flex;justify-content:center;padding-top:18px;height:50px;color:#444;margin:0 7px 0 1px;border-bottom:1px solid #dedfe5}</style>
<div class="tabs"><div class="on">${t('十档',73,35)}</div><div>${t('明细',71,35)}</div><div>${t('逐笔',74,35)}</div></div>
<div class="s">${S.map((q,i)=>row('卖',10-i,(34.49-i*.01).toFixed(2),q,34)).join('')}</div>
<div class="b">${B.map((q,i)=>row('买',i+1,(34.39-i*.01).toFixed(2),q,32)).join('')}</div>
<div class="more">${t('查看千档',157,37)}</div>`});

part('queue-panel',()=>{
 const half=(a,p,pw,b,gap,v,vw,vh,rows)=>`<div class="half"><div class="hd">${t(a,65,31,'color:#666')}${t(p,pw,27,'color:#dc525c;margin-left:auto;font-weight:500')}${t(b,65,31,'color:#666;margin-left:'+gap+'px')}<div class="v">${t(v,vw,vh)}</div></div>${rows.map(r=>`<div class="r">${[0,1,2,3,4].map(i=>`<div>${r[i]?`<ink-text h="26" k=".92" style="${r[i]=='1'?'margin-right:4px':''}">${r[i]}</ink-text>`:''}</div>`).join('')}</div>`).join('')}</div>`;
 return `<style>:host{display:flex;height:383px;background:linear-gradient(#ecf0f7,#ecf0f7) 0 0/100% 12px no-repeat #fff;box-sizing:border-box;padding:12px 5px 0 6px}
.half{width:522px;box-sizing:border-box;border-top:1px solid #e2e4ea;border-left:2px solid #e8e9ee;color:#2e9550}
.half+.half{color:#e35a52;border-right:2px solid #e8e9ee;width:523px;border-left-width:1px}
.hd{display:flex;align-items:center;height:65px;border-bottom:2px solid #e8e9ee;padding:2px 3px 0 6px;box-sizing:content-box;height:64px}
.v{width:191px;display:flex;justify-content:flex-end;color:#2d303b;font-weight:500}
.r{display:flex;height:60px;justify-content:flex-end;padding-right:3px}.r div{width:104px;flex:none;display:flex;justify-content:flex-end;align-items:center;font-weight:500}
</style>${half('卖均','35.71',85,'总卖',13,'1.28万',103,34,[['52','1','4','2','1'],['22']])}${half('买均','33.78',89,'总买',8,'4051',74,27,[['1','5','1','2','23'],['40','2','3','24']])}`});

part('bottom-bar',()=>{
 const item=(icon,s,w)=>`<div class="it">${icon}${t(s,w,37)}</div>`,k='#2d303b';
 return `<style>:host{display:flex;width:1080px;height:165px;background:#fff}
.idx{width:293px;box-sizing:border-box;display:flex;flex-direction:column;background:linear-gradient(45deg,transparent 50%,#9ba7ba 50%) 100% 0/27px 27px no-repeat;color:#dc525e;font-weight:500}
.idx div{display:flex;align-items:center;margin:12px 0 0 42px;gap:15px}
.it{width:196px;display:flex;flex-direction:column;align-items:center;padding-top:22px;gap:7px;box-sizing:border-box}
.doc{position:relative;margin-left:-4px}.bdg{position:absolute;left:9px;top:49px;width:58px;height:24px;border-radius:0 6px 6px 6px;background:#fb6a5c;color:#fff;display:flex;align-items:center;justify-content:center}</style>
<div class="idx">${t('10390.70',168,33,'margin:46px 0 0 65px')}<div>${t('深证',75,36,'color:#2d303b;font-weight:400')}${t('+1.69%',120,28)}</div></div>
${item(ic(76,75,'0 0 76 75',`<circle cx="38" cy="36.500" r="28" fill="none" stroke="${k}" stroke-width="5"/><path d="M29 36.500h18" stroke="#2d303b" stroke-width="5.500" stroke-linecap="round"/>`),'删自选',113)}
${item(`<div class="doc">${ic(76,75,'0 0 76 75',`<path d="M20 13V10q0-5 5-5h34q6 0 6 6v36" fill="none" stroke="${k}" stroke-width="5"/><path d="M12 60V20q0-6 6-6h29q6 0 6 6v29" fill="none" stroke="${k}" stroke-width="5"/><path d="M22 27.500h20M22 37h14" stroke="${k}" stroke-width="5" stroke-linecap="round"/><path d="M9 42q2 6 7 8H9z" fill="#fb6a5c"/>`)}<div class="bdg">${t('限免',39,19,'font-weight:500')}</div></div>`,'深度资料',150)}
${item(ic(76,75,'0 0 76 75',`<g fill="none" stroke="${k}" stroke-width="5"><path d="M18 20A26.500 26.500 0 0 1 65 38"/><path d="M58.500 53A26.500 26.500 0 0 1 11 35"/></g><path d="M53 37.500h23L66 50zM0 35.500h22L11 23zM38 28l8 9-8 9-8-9z" fill="${k}"/>`),'交易',72)}
${item(ic(76,75,'0 0 76 75',`<circle cx="38" cy="36.500" r="28" fill="none" stroke="${k}" stroke-width="5"/><circle cx="29" cy="36.500" r="5.500" fill="${k}"/><circle cx="47" cy="36.500" r="5.500" fill="${k}"/>`),'更多',73)}`});

part('system-nav',()=>`<style>:host{display:flex;width:1080px;height:126px;background:#000;justify-content:center;gap:180px;padding-top:36px;box-sizing:border-box}</style>
${ic(60,48,'0 0 60 48','<g fill="#808080"><rect x="7" y="9" width="46" height="6" rx="2"/><rect x="7" y="24" width="46" height="6" rx="2"/><rect x="7" y="39" width="46" height="6" rx="2"/></g>')}
${ic(60,48,'0 0 60 48','<path d="M3.500 24.500L30 5l26.500 19.500" fill="none" stroke="#808080" stroke-width="5" stroke-linecap="round" stroke-linejoin="round"/><path d="M12 27v11q0 4.500 5 4.500h26q5 0 5-4.500V27" fill="none" stroke="#808080" stroke-width="5"/>')}
${ic(60,48,'0 0 60 48','<path d="M15 42.500h31q5.500 0 5.500-5.500V17q0-5-5.500-5H9" fill="none" stroke="#808080" stroke-width="5.500" stroke-linejoin="round"/><path d="M6 12L18.500 3q2-1 2 1v8z" fill="#808080"/>')}`);
</script>
</body>
</html>
